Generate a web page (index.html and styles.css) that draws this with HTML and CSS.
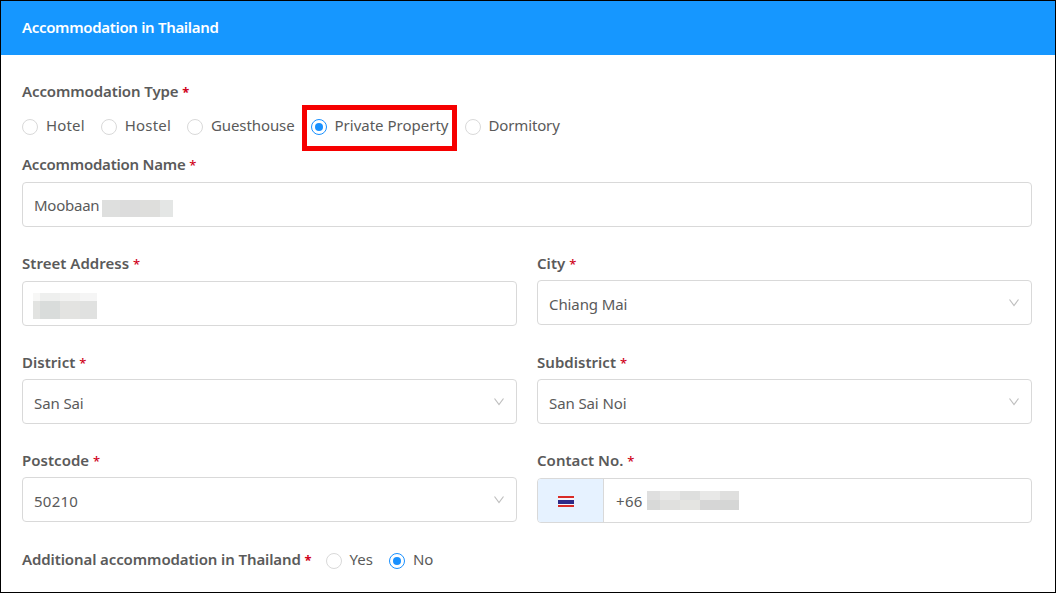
FILE: index.html
```html
<!DOCTYPE html>
<html lang="en">
<head>
    <meta charset="UTF-8">
    <meta name="viewport" content="width=device-width, initial-scale=1.0">
    <title>Accommodation in Thailand</title>
    <link rel="stylesheet" href="styles.css">
</head>
<body>
    <form class="panel">
        <h2 class="panel-header">Accommodation in Thailand</h2>

        <div class="panel-body">
            <div class="label">Accommodation Type <span class="required bold">*</span></div>
            <div class="radio-row">
                <label class="radio hotel"><span class="dot"></span>Hotel</label>
                <label class="radio hostel"><span class="dot"></span>Hostel</label>
                <label class="radio guesthouse"><span class="dot"></span>Guesthouse</label>
                <label class="radio highlight"><span class="dot checked"></span>Private Property</label>
                <label class="radio dormitory"><span class="dot"></span>Dormitory</label>
            </div>

            <div class="field name-field">
                <div class="label tight">Accommodation Name <span class="required">*</span></div>
                <div class="input name">Moobaan <span class="mask mask-name"></span></div>
            </div>

            <div class="grid">
                <div class="field">
                    <div class="label">Street Address <span class="required">*</span></div>
                    <div class="input"><span class="mask mask-street"></span></div>
                </div>
                <div class="field">
                    <div class="label">City <span class="required">*</span></div>
                    <div class="input select">Chiang Mai
                        <svg class="arrow" viewBox="0 0 12 12"><path d="M1.5 2.5 L6 8.5 L10.5 2.5"/></svg>
                    </div>
                </div>
                <div class="field">
                    <div class="label">District <span class="required">*</span></div>
                    <div class="input select">San Sai
                        <svg class="arrow" viewBox="0 0 12 12"><path d="M1.5 2.5 L6 8.5 L10.5 2.5"/></svg>
                    </div>
                </div>
                <div class="field">
                    <div class="label">Subdistrict <span class="required">*</span></div>
                    <div class="input select">San Sai Noi
                        <svg class="arrow" viewBox="0 0 12 12"><path d="M1.5 2.5 L6 8.5 L10.5 2.5"/></svg>
                    </div>
                </div>
                <div class="field">
                    <div class="label">Postcode <span class="required">*</span></div>
                    <div class="input select postcode">50210
                        <svg class="arrow" viewBox="0 0 12 12"><path d="M1.5 2.5 L6 8.5 L10.5 2.5"/></svg>
                    </div>
                </div>
                <div class="field">
                    <div class="label">Contact No. <span class="required">*</span></div>
                    <div class="input phone">
                        <span class="country"><span class="flag"></span></span>
                        <span class="number">+66</span>
                        <span class="mask mask-phone"></span>
                    </div>
                </div>
            </div>

            <div class="radio-row additional">
                <div class="label">Additional accommodation in Thailand <span class="required bold">*</span></div>
                <label class="radio"><span class="dot"></span>Yes</label>
                <label class="radio"><span class="dot checked"></span>No</label>
            </div>
        </div>
    </form>
</body>
</html>
```
FILE: styles.css
```css
:root {
    --primary-color: #1697ff;
    --text-color: #5a5a5a;
    --border-color: #d9d9d9;
}

* {
    box-sizing: border-box;
}

body {
    margin: 0;
    background-color: #fff;
    color: var(--text-color);
    font-family: 'Noto Sans', sans-serif;
    font-size: 15px;
    line-height: 22px;
}

.panel {
    height: 593px;
    border: 1px solid #000;
    overflow: hidden;
}

.panel-header {
    margin: 0;
    height: 54px;
    padding: 0 21px;
    background: var(--primary-color);
    color: #fff;
    font-size: 15px;
    font-weight: 600;
    letter-spacing: -0.32px;
    line-height: 53px;
}

.panel-body {
    padding: 25px 23px 0 21px;
}

.label {
    height: 22px;
    font-weight: 600;
    letter-spacing: -0.1px;
    white-space: nowrap;
}

.label.tight {
    letter-spacing: -0.22px;
}

.required {
    color: #d0021b;
    font-size: 13px;
    font-weight: 500;
    line-height: 1;
}

.required.bold {
    font-weight: 700;
}

.radio-row {
    display: flex;
    align-items: flex-start;
    height: 46px;
    margin-top: 3px;
}

.radio {
    display: flex;
    align-items: center;
    gap: 8px;
    margin: 9px 16px 0 0;
    line-height: 22px;
    white-space: nowrap;
}

.dot {
    display: flex;
    flex: none;
    align-items: center;
    justify-content: center;
    width: 16px;
    height: 16px;
    margin-top: 4px;
    border: 1px solid var(--border-color);
    border-radius: 50%;
}

.dot.checked {
    border-color: #1890ff;
}

.dot.checked::after {
    content: "";
    width: 8px;
    height: 8px;
    border-radius: 50%;
    background: #1890ff;
}

.radio.hotel {
    letter-spacing: 0.15px;
}

.radio.hostel {
    letter-spacing: 0.2px;
}

.radio.guesthouse {
    margin-right: 7px;
    letter-spacing: -0.1px;
}

.radio.dormitory {
    letter-spacing: -0.15px;
}

.radio.highlight {
    height: 46px;
    width: 155px;
    margin: 0 8px 0 0;
    padding: 0 0 6px 4px;
    border: 5px solid #f60000;
}

.name-field {
    margin-top: 2px;
}

.input {
    display: flex;
    align-items: center;
    height: 45px;
    margin-top: 7px;
    padding: 0 11px;
    border: 1px solid var(--border-color);
    border-radius: 4px;
}

.input.name {
    letter-spacing: -0.25px;
}

.select {
    justify-content: space-between;
    margin-top: 6px;
    padding-top: 3px;
    letter-spacing: -0.1px;
}

.select.postcode {
    letter-spacing: 0.25px;
}

.arrow {
    width: 12px;
    height: 12px;
    margin-top: -2px;
    fill: none;
    stroke: #bfbfbf;
    stroke-width: 1.2;
}

.grid {
    display: grid;
    grid-template-columns: 1fr 1fr;
    grid-template-rows: 99px 98px 98px;
    column-gap: 20px;
    margin-top: 25px;
}

.grid .label {
    letter-spacing: 0.03px;
}

.mask {
    display: block;
    flex: none;
}

.mask-name {
    width: 71px;
    height: 17px;
    margin: 7px 0 0 3px;
    background: linear-gradient(90deg, #dedfde 0 18px, #dcdcdc 18px 38px, #dededc 38px 58px, #e4e6e5 58px);
}

.mask-street {
    width: 64px;
    height: 26px;
    margin: 4px 0 0 -1px;
    background:
        linear-gradient(90deg, #f7f7f6 0 7px, #eeefee 7px 27px, #f2f2f1 27px 47px, #f5f5f5 47px) 0 0 / 100% 8px no-repeat,
        linear-gradient(90deg, #e2e3e1 0 7px, #d9dcdb 7px 27px, #e3e3e1 27px 47px, #e0e1e0 47px);
}

.phone {
    padding: 0;
    overflow: hidden;
}

.country {
    display: flex;
    align-items: center;
    align-self: stretch;
    width: 66px;
    padding-left: 20px;
    padding-top: 2px;
    border-right: 1px solid var(--border-color);
    background: #e6f2ff;
}

.flag {
    width: 16px;
    height: 11px;
    background: linear-gradient(#d82b26 0 2px, #f5f3fa 2px 4px, #2d2a88 4px 8px, #f5f3fa 8px 9px, #d82b26 9px);
}

.number {
    margin: 1px 4px 0 12px;
    letter-spacing: 0.35px;
}

.mask-phone {
    width: 92px;
    height: 19px;
    background:
        linear-gradient(90deg, #dfdfdf 0 13px, #e7e7e6 13px 33px, #dedfde 33px 53px, #e8e8e7 53px 73px, #dfdfde 73px) 0 0 / 100% 9px no-repeat,
        linear-gradient(90deg, #d8d9d8 0 13px, #e0e0de 13px 33px, #e4e4e1 33px 53px, #d6d6d6 53px 73px, #d5d6d5 73px);
}

.additional {
    height: 22px;
    margin-top: 1px;
}

.additional .label {
    margin-right: 14px;
}

.additional .radio {
    margin-top: 0;
}
```
